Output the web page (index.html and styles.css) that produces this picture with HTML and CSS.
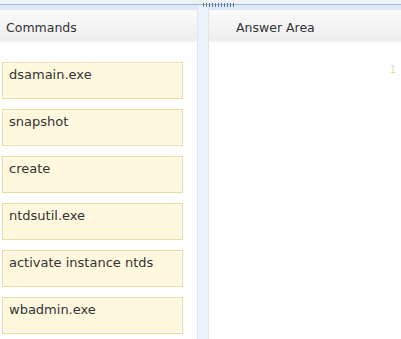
FILE: index.html
```html
<!DOCTYPE html>
<html lang="en">
<head>
  <meta charset="UTF-8">
  <title>Drag and Drop</title>
  <link rel="stylesheet" href="styles.css">
</head>
<body>
  <div class="topbar"></div>
  <div class="panes">
    <div class="pane left">
      <div class="pane-head">Commands</div>
      <div class="card-list">
        <div class="card">dsamain.exe</div>
        <div class="card">snapshot</div>
        <div class="card">create</div>
        <div class="card">ntdsutil.exe</div>
        <div class="card">activate instance ntds</div>
        <div class="card">wbadmin.exe</div>
      </div>
    </div>
    <div class="splitter">
      <span class="grip"></span>
    </div>
    <div class="pane right">
      <div class="pane-head">Answer Area</div>
      <div class="answer-body">
        <span class="slot-num">1</span>
      </div>
    </div>
  </div>
</body>
</html>
```

FILE: styles.css
```css
body {
  margin: 0;
  width: 401px;
  height: 339px;
  overflow: hidden;
  background: #fff;
  font-family: "DejaVu Sans", Verdana, sans-serif;
  font-size: 13px;
  color: #333;
}
.topbar {
  height: 4px;
  background: #eef1f5;
  border-bottom: 1px solid #a9b8cc;
}
.panes {
  display: flex;
  height: 334px;
}
.pane {
  display: flex;
  flex-direction: column;
}
.left {
  width: 197px;
}
.right {
  flex: 1;
}
.pane-head {
  height: 31px;
  line-height: 35px;
  border-top: 5px solid #dde9f8;
  background: linear-gradient(#fafafa, #efefef);
  border-bottom: 1px solid #f3f3f3;
  padding-left: 6px;
  font-size: 12.5px;
  color: #333;
}
.right .pane-head {
  padding-left: 27px;
}
.card-list {
  display: flex;
  flex-direction: column;
  gap: 10px;
  padding: 20px 0 0 2px;
}
.card {
  width: 169px;
  height: 27px;
  padding: 4px 4px 4px 6px;
  background: #fff8df;
  border: 1px solid #eadc9e;
  box-shadow: inset 0 0 0 1px #fffbea;
}
.splitter {
  position: relative;
  width: 10px;
  background: #eaf3fc;
  border-left: 1px solid #dbe6f2;
  border-right: 1px solid #dbe6f2;
}
.grip {
  position: absolute;
  top: -2px;
  left: 5px;
  width: 31px;
  height: 4px;
  background: repeating-linear-gradient(90deg, #5a7aa6 0 1px, transparent 1px 3px);
}
.answer-body {
  position: relative;
  flex: 1;
}
.slot-num {
  position: absolute;
  top: 22px;
  right: 5px;
  font-size: 10px;
  color: #d9dd9a;
}
```
